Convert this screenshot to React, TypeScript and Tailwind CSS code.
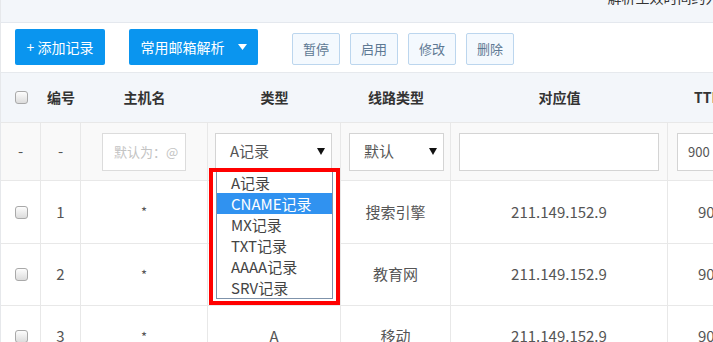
import React from "react";

const COLS = "grid grid-cols-[40px_40px_127px_133px_110px_217px_84px]";

function Check() {
  return (
    <span className="inline-block w-[13px] h-[13px] rounded-[3px] border border-[#a9a9a9] bg-gradient-to-b from-[#fdfdfd] to-[#dcdcdc]" />
  );
}

function Arrow() {
  return (
    <svg width="8" height="7" viewBox="0 0 8 7" className="shrink-0">
      <path d="M0 0 L8 0 L4 7 Z" fill="#111" />
    </svg>
  );
}

const rows = [
  { n: "1", type: "", line: "搜索引擎" },
  { n: "2", type: "", line: "教育网" },
  { n: "3", type: "A", line: "移动" },
];

export default function App() {
  return (
    <div
      className="relative w-[713px] h-[342px] overflow-hidden bg-white border-l border-[#e6e8eb] text-[#555]"
      style={{ fontFamily: '"Noto Sans CJK SC", "Microsoft YaHei", sans-serif' }}
    >
      {/* top strip */}
      <div className="h-[23px] bg-[#f3f6fa] border-b border-[#e4e8ee] flex">
        <span className="ml-[118px] -mt-[12px] text-[14px] text-[#e33] leading-[14px]">*</span>
        <span className="ml-[482px] -mt-[11px] text-[14px] text-[#333] leading-[16px] whitespace-nowrap">
          解析生效时间约为10分钟
        </span>
      </div>

      {/* toolbar */}
      <div className="h-[50px] flex items-end pb-[7px] pl-[14px] border-b border-[#e6e9ed]">
        <button className="h-[36px] w-[90px] rounded-[2px] bg-[#0a95ef] text-white text-[14px] flex items-center justify-center">
          + 添加记录
        </button>
        <button className="ml-[24px] h-[36px] w-[129px] rounded-[2px] bg-[#0a95ef] text-white text-[14px] flex items-center justify-center gap-[13px]">
          常用邮箱解析
          <svg width="9" height="7" viewBox="0 0 9 7">
            <path d="M0 0 L9 0 L4.5 6 Z" fill="#fff" />
          </svg>
        </button>
        <div className="ml-[34px] flex gap-[10px]">
          {["暂停", "启用", "修改", "删除"].map((t) => (
            <button
              key={t}
              className="h-[32px] w-[48px] rounded-[2px] border border-[#bcd6ee] bg-[#f4f9fe] text-[#5d7893] text-[13px]"
            >
              {t}
            </button>
          ))}
        </div>
      </div>

      {/* header */}
      <div className={`${COLS} h-[50px] bg-[#f3f6fa] border-b border-[#e8e8e8] text-[14px] font-bold text-[#333] items-center`}>
        <div className="pl-[14px] flex items-center">
          <Check />
        </div>
        <div className="text-center">编号</div>
        <div className="text-center">主机名</div>
        <div className="text-center">类型</div>
        <div className="text-center">线路类型</div>
        <div className="text-center">对应值</div>
        <div className="pl-[26px]">TTL</div>
      </div>

      {/* input row */}
      <div className={`${COLS} h-[58px] bg-[#f9f9f9] border-b border-[#e8e8e8] text-[15px]`}>
        <div className="border-r border-[#e8e8e8] flex items-center justify-center">-</div>
        <div className="border-r border-[#e8e8e8] flex items-center justify-center">-</div>
        <div className="border-r border-[#e8e8e8] flex items-center pl-[21px]">
          <div className="w-[84px] h-[38px] bg-white border border-[#dcdcdc] flex items-center pl-[11px] text-[13px] text-[#c3c3c3] whitespace-nowrap overflow-hidden">
            默认为：@
          </div>
        </div>
        <div className="border-r border-[#e8e8e8] flex items-center pl-[7px]">
          <div className="w-[117px] h-[38px] bg-white border border-[#d4d4d4] flex items-center justify-between pl-[14px] pr-[6px] text-[15px] text-[#555]">
            A记录
            <Arrow />
          </div>
        </div>
        <div className="border-r border-[#e8e8e8] flex items-center pl-[8px]">
          <div className="w-[95px] h-[38px] bg-white border border-[#d4d4d4] flex items-center justify-between pl-[14px] pr-[6px] text-[15px] text-[#555]">
            默认
            <Arrow />
          </div>
        </div>
        <div className="border-r border-[#e8e8e8] flex items-center pl-[8px]">
          <div className="w-[200px] h-[38px] bg-white border border-[#d4d4d4]" />
        </div>
        <div className="flex items-center pl-[9px]">
          <div className="w-[80px] h-[38px] bg-white border border-[#d4d4d4] flex items-center pl-[10px] text-[13px] text-[#555]">
            900
          </div>
        </div>
      </div>

      {/* data rows */}
      {rows.map((r, i) => (
        <div
          key={r.n}
          className={`${COLS} ${i === 0 ? "h-[63px]" : "h-[62px]"} bg-white border-b border-[#e8e8e8] text-[15px] text-[#555]`}
        >
          <div className="border-r border-[#e8e8e8] flex items-center pl-[14px]">
            <Check />
          </div>
          <div className="border-r border-[#e8e8e8] flex items-center justify-center">{r.n}</div>
          <div className="border-r border-[#e8e8e8] flex items-center justify-center text-[13px]">*</div>
          <div className="border-r border-[#e8e8e8] flex items-center justify-center">{r.type}</div>
          <div className="border-r border-[#e8e8e8] flex items-center justify-center">{r.line}</div>
          <div className="border-r border-[#e8e8e8] flex items-center justify-center">211.149.152.9</div>
          <div className="flex items-center pl-[30px]">900</div>
        </div>
      ))}

      {/* dropdown overlay with red highlight */}
      <div className="absolute left-[208px] top-[168px] w-[131px] h-[137px] border-[4px] border-[#ff0000] bg-white">
        <div className="ml-[3px] w-[117px] border border-t-0 border-[#7f93ab] bg-white text-[15px] text-[#444]">
          {["A记录", "CNAME记录", "MX记录", "TXT记录", "AAAA记录", "SRV记录"].map((t, i) => (
            <div
              key={t}
              className={`h-[21px] leading-[21px] pl-[14px] whitespace-nowrap ${i === 1 ? "bg-[#3092f0] text-white" : ""}`}
            >
              {t}
            </div>
          ))}
        </div>
      </div>
    </div>
  );
}
